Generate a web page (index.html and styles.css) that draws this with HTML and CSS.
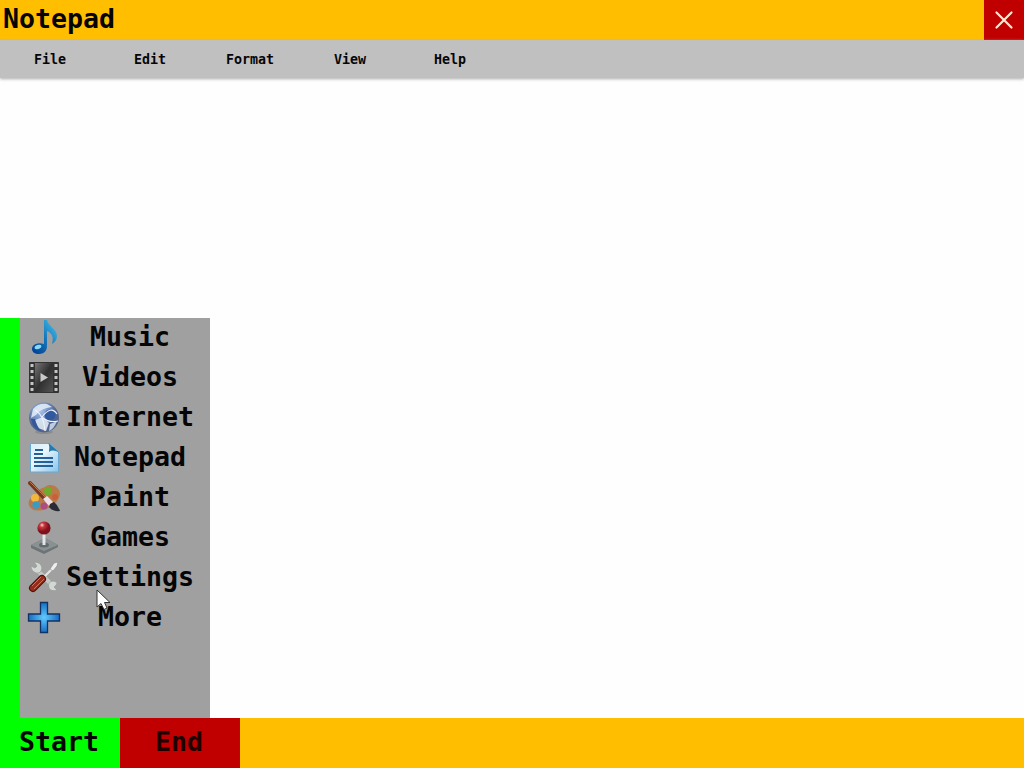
FILE: index.html
```html
<!DOCTYPE html>
<html lang="en">
<head>
<meta charset="utf-8">
<title>Notepad</title>
<link rel="stylesheet" href="styles.css">
</head>
<body>
<div class="screen">
  <header class="titlebar">
    <h1 class="title">Notepad</h1>
    <button class="close" aria-label="Close"><svg width="40" height="40" viewBox="0 0 40 40"><path d="M12.5 12.5L27.5 27.5M27.5 12.5L12.5 27.5" stroke="#ffe9d0" stroke-width="2.2" stroke-linecap="round"/></svg></button>
  </header>
  <nav class="menubar"><span>File</span><span>Edit</span><span>Format</span><span>View</span><span>Help</span></nav>
  <main class="editor">
    <div class="start-menu">
      <ul class="apps">
        <li><svg class="icon" viewBox="0 0 32 32"><defs><linearGradient id="note" x1="0" y1="1" x2="1" y2="0"><stop offset="0" stop-color="#003a91"/><stop offset=".5" stop-color="#1577bb"/><stop offset="1" stop-color="#4bc6ed"/></linearGradient></defs><path d="M16 -1H19C20 5 29 8 29 15C29 19 27 21 24 23C26 16 24 12 19 10V25C19 30 16 33 11 33C7 33 4 31 4 28C4 23 11 21 16 23Z" fill="url(#note)"/><ellipse cx="10" cy="26" rx="3.5" ry="2" fill="#8bd8f5" transform="rotate(-20 10 26)"/></svg><span>Music</span></li>
        <li><svg class="icon" viewBox="0 0 32 32"><defs><linearGradient id="film" x2="1" y2="1"><stop stop-color="#777"/><stop offset=".5" stop-color="#303030"/><stop offset="1" stop-color="#555"/></linearGradient></defs><rect x="1" y="1" width="30" height="31" rx="1" fill="#333"/><rect x="7" y="2" width="18" height="29" fill="url(#film)"/><path d="M4 3V31M28 3V31" stroke="#c6c6c6" stroke-width="3" stroke-dasharray="3 3"/><path d="M12.500 12L20 16.500L12.500 21Z" fill="#c9c9c9"/></svg><span>Videos</span></li>
        <li><svg class="icon" viewBox="0 0 32 32"><defs><radialGradient id="globe" cx=".4" cy=".3"><stop stop-color="#a6c0e6"/><stop offset=".6" stop-color="#6f8fc4"/><stop offset="1" stop-color="#52658e"/></radialGradient></defs><ellipse cx="16" cy="31" rx="9" ry="2" fill="#777" opacity=".5"/><circle cx="16" cy="16.500" r="15" fill="url(#globe)"/><path d="M5 8Q10 2 19 3L24 6Q13 7 8 14L3 17ZM7 19L15 16L21 22L18 30L10 27Z" fill="#e6eef8" opacity=".85"/><path d="M22 23L29 20Q26 28 21 30Z" fill="#dbe6f5" opacity=".8"/><circle cx="22" cy="14" r="5.500" fill="#30599f"/><path d="M3 18Q5 28 13 30Q8 24 7 18Z" fill="#34569a"/><path d="M7 9Q16 14 17 30M14 16Q23 4 29 13M15 17Q21 22 30 20" fill="none" stroke="#eef3ff" stroke-width="1.100"/></svg><span>Internet</span></li>
        <li><svg class="icon" viewBox="0 0 32 32"><defs><linearGradient id="page" x2="1" y2="1"><stop stop-color="#d7eefb"/><stop offset=".4" stop-color="#e8f6fd"/><stop offset="1" stop-color="#86c3ec"/></linearGradient></defs><path d="M2.500 2.500H21L30.500 11V31H2.500Z" fill="url(#page)" stroke="#69a8d2"/><path d="M20.500 2L31 11.500Q25 8 21 11Q22 6 20.500 2Z" fill="#2678aa"/><path d="M7 9H15M6 13H15M6 17H25M6 21H25M6 25H25" stroke="#24619a" stroke-width="1.800"/></svg><span>Notepad</span></li>
        <li><svg class="icon" viewBox="0 0 32 32"><path d="M17 6C23 1 32 6 32 13C31 23 16 32 6 29C0 27-1 20 3 17C9 16 13 14 11 10C11 8 14 7 17 6Z" fill="#b97a48"/><circle cx="20" cy="10" r="4" fill="#6cab2c"/><circle cx="27" cy="16" r="3" fill="#c9603a"/><circle cx="7" cy="17" r="4" fill="#f4b739"/><circle cx="8" cy="24" r="3.700" fill="#3b9bc4"/><circle cx="16" cy="25" r="3.500" fill="#ad4e83"/><path d="M2 2L17 18" stroke="#753720" stroke-width="4" stroke-linecap="round"/><path d="M2 1L17 16" stroke="#bc7748"/><path d="M15 18L19 15L25 21L21 25Z" fill="#eddfe6"/><path d="M22 23L26 21Q30 24 32 30Q25 31 21 26Z" fill="#292c36"/></svg><span>Paint</span></li>
        <li><svg class="icon" viewBox="0 0 32 32"><defs><radialGradient id="ball" cx=".35" cy=".28"><stop stop-color="#ffd5d2"/><stop offset=".35" stop-color="#c83a40"/><stop offset="1" stop-color="#80101b"/></radialGradient></defs><path d="M3 24L17 17L30 24V26L16 33L3 27Z" fill="#6d7475"/><path d="M3 24L17 17L30 24L16 30Z" fill="#899193"/><ellipse cx="16" cy="24" rx="5" ry="2.500" fill="#626a6c"/><path d="M16 13V24" stroke="#e4e7e8" stroke-width="3"/><circle cx="16" cy="7" r="6.600" fill="url(#ball)"/></svg><span>Games</span></li>
        <li><svg class="icon" viewBox="0 0 32 32"><path d="M9 9L26 26" stroke="#c2c9c5" stroke-width="4"/><path d="M3 5L7 7L9 5L6 1Q13 1 14 7Q13 13 8 12Q3 10 3 5M29 23L26 26L29 29Q23 31 21 27Q19 21 25 20Q29 20 29 23" fill="#d4d8d5" stroke="#949b96" stroke-width=".7"/><path d="M15 17L24 8" stroke="#e6e6e6" stroke-width="2"/><path d="M22 8L26 2L30 1L29 5L25 10Z" fill="#eee" stroke="#858585" stroke-width=".6"/><path d="M5 27L14 18" stroke="#4b1008" stroke-width="8" stroke-linecap="round"/><path d="M5 27L14 18" stroke="#962c1b" stroke-width="6" stroke-linecap="round"/><path d="M4 25L13 16M6 28L16 18" stroke="#cf745c" stroke-width="1"/></svg><span>Settings</span></li>
        <li><svg class="icon" viewBox="0 0 32 32"><defs><radialGradient id="plus"><stop stop-color="#61c9ff"/><stop offset="1" stop-color="#176dc0"/></radialGradient></defs><path d="M12.500 1.500H19.500V13H31.500V20H19.500V31.500H12.500V20H.5V13H12.500Z" fill="url(#plus)" stroke="#113267" stroke-width="1.300"/></svg><span>More</span></li>
      </ul>
    </div>
  </main>
  <footer class="taskbar"><button class="task start">Start</button><button class="task end">End</button></footer>
  <svg class="cursor" viewBox="0 0 15 21"><path d="M1 1V18L5 14.500L8 20.500L11 19L8.500 13.500H14Z" fill="#fff" stroke="#333"/></svg>
</div>
</body>
</html>
```
FILE: styles.css
```css
* { box-sizing: border-box; }

body {
  margin: 0;
  font-family: "DejaVu Sans Mono", "Liberation Mono", monospace;
  font-size: 26.6px;
  color: #050505;
}

button {
  border: 0;
  padding: 0;
  font: inherit;
  color: inherit;
}

.screen {
  position: relative;
  display: flex;
  flex-direction: column;
  height: 768px;
  overflow: hidden;
  background: #fefefe;
}

.titlebar {
  display: flex;
  justify-content: space-between;
  height: 40px;
  background: #ffbf00;
}

.title {
  margin: 0;
  padding-left: 3px;
  font-size: inherit;
  font-weight: bold;
  line-height: 38px;
}

.close { width: 40px; height: 40px; background: #c00000; }
.close svg { display: block; }

.menubar {
  display: flex;
  height: 38px;
  background: #c0c0c0;
  box-shadow: 0 1px 3px #aaa;
  font-size: 13.3px;
  font-weight: bold;
  line-height: 40px;
}

.menubar span { width: 100px; text-align: center; }

.editor { display: flex; flex: 1; align-items: flex-end; }

.start-menu {
  width: 210px;
  height: 400px;
  border-left: 20px solid #00ff00;
  background: #a0a0a0;
}

.apps { margin: 0; padding: 0 10px 0 8px; list-style: none; }
.apps li { display: flex; height: 40px; }
.apps span {
  flex: 1;
  text-align: center;
  white-space: nowrap;
  font-weight: bold;
  line-height: 38px;
}
.icon { width: 32px; height: 32px; margin-top: 3px; overflow: visible; }

.taskbar { display: flex; height: 50px; background: #ffbf00; }
.task { width: 120px; padding-bottom: 2px; font-weight: bold; line-height: 48px; }
.start { padding-right: 2px; background: #00ff00; }
.end { padding-right: 2px; background: #c00000; color: #210000; }

/* The pointer floats above the menu. */
.cursor { position: absolute; left: 96px; top: 589px; width: 15px; height: 21px; }
```
